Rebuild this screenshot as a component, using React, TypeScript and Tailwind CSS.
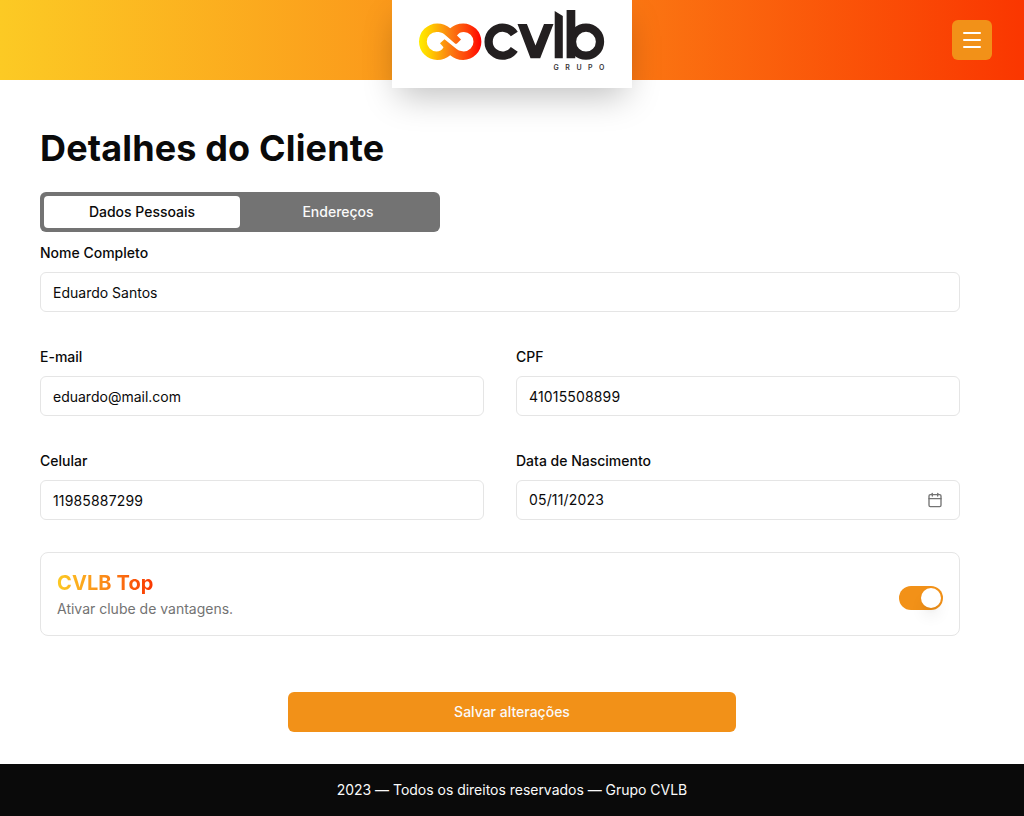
import { Calendar, Menu } from "lucide-react";

function Logo() {
  return (
    <svg width="240" height="88" viewBox="392 0 240 88" role="img" aria-label="CVLB Grupo">
      <defs>
        <linearGradient id="ring" gradientUnits="userSpaceOnUse" x1="419" y1="0" x2="481.5" y2="0">
          <stop offset="0" stopColor="#ffee00" />
          <stop offset="0.2" stopColor="#ffc800" />
          <stop offset="0.5" stopColor="#fb7d12" />
          <stop offset="0.8" stopColor="#ff3a08" />
          <stop offset="1" stopColor="#ff0000" />
        </linearGradient>
      </defs>
      <path
        fill="url(#ring)"
        d="M437.2 23.5C442.5 23.5 446.5 25.2 450.2 28.2C453.9 25.2 457.9 23.5 463.2 23.5A18.2 18.2 0 0 1 463.2 59.9C457.9 59.9 453.9 58.2 450.2 55.2C446.5 58.2 442.5 59.9 437.2 59.9A18.2 18.2 0 0 1 437.2 23.5Z"
      />
      <path
        fill="#fff"
        d="M436.500 32C439.500 32 442 32.500 444 34L455 43.500Q456 44.300 457 43.400L461 39.600L457 35.500C458.500 33 461 32 463.800 32A9.700 9.700 0 0 1 463.800 51.400C460 51.400 457.500 50 455 47.800L444.500 39.200L440 43.200L443.500 47.300C442 50.300 439.500 51.400 436.500 51.400A9.700 9.700 0 0 1 436.500 32Z"
      />
      <g fill="none" stroke="#231f20" strokeWidth="8.3">
        <path d="M514.300 34A14 14 0 1 0 514.300 49.400" />
        <circle cx="586" cy="41.7" r="14" />
      </g>
      <path
        fill="#231f20"
        d="M517.5 24H526.9L535.5 45.500L544 24H553.5L540.2 58.300H530.500ZM554.700 11L562.800 16V58.300H554.700ZM566.600 10H575.300V58.300H566.600Z"
      />
      <text
        x="553.6"
        y="69.600"
        textLength="50.800"
        fill="#3a3738"
        fontFamily="Inter, sans-serif"
        fontSize="7"
        fontWeight="600"
      >
        GRUPO
      </text>
    </svg>
  );
}

type FieldProps = { label: string; value: string; kind?: "text" | "number" | "date" };

function Field({ label, value, kind = "text" }: FieldProps) {
  return (
    <div>
      <div className="text-sm leading-[14px] font-medium">{label}</div>
      <div
        className={`mt-3 flex h-10 items-center justify-between rounded-md border border-neutral-200 pr-4 pl-3 text-sm ${kind === "date" ? "" : "pt-0.5"}`}
      >
        <span className={kind === "text" ? "" : "tracking-[0.16px]"}>{value}</span>
        {kind === "date" && <Calendar className="size-4 text-neutral-500" />}
      </div>
    </div>
  );
}

export default function App() {
  return (
    <div className="flex h-[816px] flex-col bg-white font-['Inter',sans-serif] text-neutral-950">
      <header className="grid h-20 shrink-0 grid-cols-[1fr_240px_1fr] grid-rows-[80px] bg-linear-to-r/srgb from-[#fcca24] via-[#fb8a18] to-[#fa3600]">
        <div className="col-start-2 h-[88px] bg-white shadow-[0_14px_34px_-6px_rgba(0,0,0,0.25)]">
          <Logo />
        </div>
        <div className="flex items-center justify-end pr-8">
          <button className="flex size-10 items-center justify-center rounded-md bg-[#f29118] text-white">
            <Menu className="size-6" strokeWidth={2} />
          </button>
        </div>
      </header>
      <main className="flex flex-1 flex-col pr-16 pl-10">
        <h1 className="mt-12 text-4xl font-bold tracking-[0.14px]">Detalhes do Cliente</h1>
        <div className="mt-6 grid h-10 w-[400px] grid-cols-2 rounded-md bg-[#737373] p-1 text-sm font-medium">
          <button className="rounded-sm bg-white">Dados Pessoais</button>
          <button className="text-neutral-50">Endereços</button>
        </div>
        <div className="mt-3.5 grid grid-cols-2 gap-x-8 gap-y-[38px]">
          <div className="col-span-2">
            <Field label="Nome Completo" value="Eduardo Santos" />
          </div>
          <Field label="E-mail" value="eduardo@mail.com" />
          <Field label="CPF" value="41015508899" kind="number" />
          <Field label="Celular" value="11985887299" kind="number" />
          <Field label="Data de Nascimento" value="05/11/2023" kind="date" />
        </div>
        <section className="mt-8 flex h-[84px] items-center justify-between rounded-lg border border-neutral-200 px-4">
          <div>
            <h2 className="w-fit bg-linear-to-r/srgb from-[#fcca24] via-[#fb8a18] to-[#fa3600] bg-clip-text text-xl font-bold tracking-[0.1px] text-transparent">
              CVLB Top
            </h2>
            <p className="mt-0.5 text-sm text-neutral-500">Ativar clube de vantagens.</p>
          </div>
          <button
            role="switch"
            aria-checked="true"
            className="mt-2 flex h-6 w-11 items-center justify-end rounded-full bg-[#f29118] p-0.5"
          >
            <span className="size-5 rounded-full bg-white shadow-lg" />
          </button>
        </section>
        <button className="mt-14 ml-[248px] h-10 w-[448px] rounded-md bg-[#f29118] text-sm font-medium text-neutral-50">
          Salvar alterações
        </button>
      </main>
      <footer className="flex h-[52px] shrink-0 items-center justify-center bg-neutral-950 text-sm tracking-[-0.02px] text-neutral-50">
        2023 — Todos os direitos reservados — Grupo CVLB
      </footer>
    </div>
  );
}
